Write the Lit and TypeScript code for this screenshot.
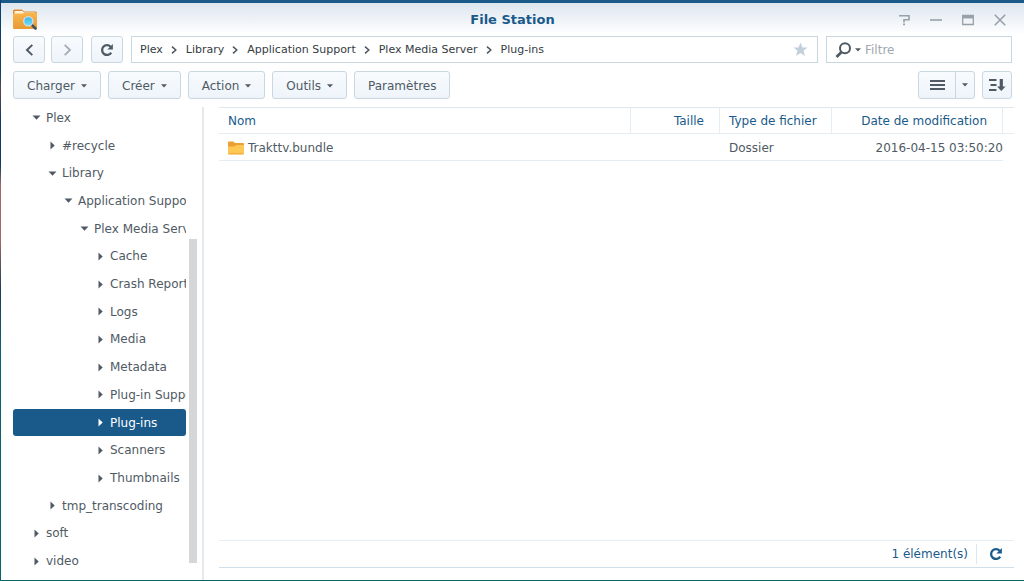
import { LitElement, html, css, svg, nothing } from "lit";
import { customElement, state } from "lit/decorators.js";
import { classMap } from "lit/directives/class-map.js";

type Node = { name: string; level: number; open?: boolean };

const TREE: Node[] = [
  { name: "Plex", level: 0, open: true },
  { name: "#recycle", level: 1 },
  { name: "Library", level: 1, open: true },
  { name: "Application Support", level: 2, open: true },
  { name: "Plex Media Server", level: 3, open: true },
  { name: "Cache", level: 4 },
  { name: "Crash Reports", level: 4 },
  { name: "Logs", level: 4 },
  { name: "Media", level: 4 },
  { name: "Metadata", level: 4 },
  { name: "Plug-in Support", level: 4 },
  { name: "Plug-ins", level: 4 },
  { name: "Scanners", level: 4 },
  { name: "Thumbnails", level: 4 },
  { name: "tmp_transcoding", level: 1 },
  { name: "soft", level: 0 },
  { name: "video", level: 0 },
];

const PATH = ["Plex", "Library", "Application Support", "Plex Media Server", "Plug-ins"];

const MENUS = [
  { label: "Charger", menu: true },
  { label: "Créer", menu: true },
  { label: "Action", menu: true },
  { label: "Outils", menu: true },
  { label: "Paramètres", menu: false },
];

const icon = (w: number, h: number, body: unknown) =>
  html`<svg width=${w} height=${h} viewBox="0 0 ${w} ${h}" aria-hidden="true">${body}</svg>`;

const caret = () => icon(6, 4, svg`<path d="M0 0.300h6L3 3.600z" fill="currentColor"/>`);
const refresh = (size: number) => html`<svg width=${size} height=${size} viewBox="0 0 14 14" aria-hidden="true">
  <path d="M11.2 9.6A4.9 4.9 0 1 1 10.6 3.7" fill="none" stroke="currentColor" stroke-width="2.3"/>
  <path d="M12.9 1v5.6H7.4z" fill="currentColor"/></svg>`;

const appIcon = icon(25, 21, svg`
  <defs><linearGradient id="fold" x1="0" y1="0" x2="0" y2="1">
    <stop offset="0" stop-color="#f9b54b"/><stop offset="1" stop-color="#e79a33"/></linearGradient>
    <linearGradient id="lens" x1="0" y1="0" x2="0" y2="1">
    <stop offset="0" stop-color="#3fb4ea"/><stop offset="1" stop-color="#6be0fb"/></linearGradient></defs>
  <path d="M0 2a1.5 1.5 0 0 1 1.5-1.5h7.5l2 2h11.500a1.5 1.5 0 0 1 1.5 1.500v6H0z" fill="#d98b2b"/>
  <path d="M1.500 2h8l1.500 1.500h11.500v2h-21z" fill="#fff2dc"/>
  <path d="M0 4.500h9.500l2-0.500H24v14.500a1.500 1.500 0 0 1-1.500 1.500h-21A1.500 1.500 0 0 1 0 18.500z" fill="url(#fold)"/>
  <path d="M18.600 15.600l3.900 3.900" stroke="#44505c" stroke-width="2.600" stroke-linecap="round"/>
  <circle cx="15.300" cy="12.300" r="4.600" fill="url(#lens)" stroke="#d5dde0" stroke-width="1.300"/>`);

const folderIcon = icon(16, 14, svg`
  <path d="M0 1.500a1 1 0 0 1 1-1h4.500l1.500 1.500h8a1 1 0 0 1 1 1v9H0z" fill="#ec9f35"/>
  <path d="M0 5.500h6.500L8 4h8v8.500a1 1 0 0 1-1 1H1a1 1 0 0 1-1-1z" fill="#fdc854"/>
  <path d="M0.500 12.800h15" stroke="#eeaa3e" stroke-width="1"/>`);

@customElement("app-root")
export class AppRoot extends LitElement {
  @state() private selected = "Plug-ins";

  static styles = css`
    :host {
      display: block;
      height: 100vh;
      box-sizing: border-box;
      padding: 0 0 1px 1px;
      background: linear-gradient(#0c3f70 0 70px, #5b4550 90px, #123a66 120px 165px, #a06a62 185px 240px, #1c3c5a 290px, #0b6270 60%, #0a6468);
      font: 12px/18px "DejaVu Sans", Verdana, sans-serif;
      color: #505a64;
    }
    * { box-sizing: border-box; }
    svg { display: block; flex: none; }
    button, input { font: inherit; color: inherit; margin: 0; }
    button { cursor: pointer; }
    .window {
      height: 100%;
      display: flex;
      flex-direction: column;
      border-top: 3px solid #195a8b;
      background: #fff linear-gradient(#dde6ef, #fff 32px) no-repeat;
    }
    .title {
      display: grid;
      grid-template-columns: 1fr auto 1fr;
      align-items: center;
      height: 33px;
      padding: 0 12px;
    }
    h1 { margin: 0; font-size: 13px; line-height: 18px; color: #195a8b; }
    .controls { display: flex; justify-content: flex-end; gap: 16px; padding-right: 4px; }
    .plain { display: flex; align-items: center; justify-content: center; padding: 0; border: 0; background: none; }
    .controls .plain { width: 16px; height: 16px; color: #98a1a9; }
    .bar { display: flex; align-items: center; padding: 0 12px; }
    .nav { height: 27px; }
    .tools { height: 28px; margin-top: 8px; gap: 7px; }
    .btn {
      display: flex;
      align-items: center;
      justify-content: center;
      gap: 6px;
      height: 28px;
      padding: 0 13px;
      border: 1px solid #c9d7e1;
      border-radius: 3px;
      background: linear-gradient(#f8fbfe, #eef4fa);
    }
    .menu { padding-top: 1px; }
    .square { width: 32px; height: 27px; padding: 0; margin-right: 6px; }
    .reload { margin: 0 8px 0 2px; }
    .dim { color: #a3acb4; }
    .path {
      flex: 1;
      display: flex;
      align-items: center;
      height: 27px;
      padding: 0 9px 0 8px;
      border: 1px solid #c9d7e1;
      background: #fff;
      font-size: 11px;
    }
    .path ol { flex: 1; display: flex; margin: 0; padding: 1px 0 0; list-style: none; }
    .path li { display: flex; align-items: center; gap: 8px; margin-right: 9px; }
    .path a { color: #353c43; text-decoration: none; white-space: nowrap; }
    .star { color: #c3d0dc; }
    .filter {
      width: 186px;
      height: 27px;
      margin-left: 8px;
      padding-left: 8px;
      display: flex;
      align-items: center;
      gap: 4px;
      border: 1px solid #c9d7e1;
      background: #fff;
    }
    .filter .plain { gap: 3px; }
    .filter input { flex: 1; min-width: 0; padding: 0; border: 0; outline: 0; background: none; font-size: 12px; }
    .filter input::placeholder { color: #a0a8b0; opacity: 1; }
    .split { display: flex; margin-left: auto; }
    .view { width: 38px; padding: 0; border-radius: 3px 0 0 3px; }
    .more { width: 20px; padding: 0; margin-left: -1px; border-radius: 0 3px 3px 0; }
    .sort { width: 30px; padding: 0; }
    .content { flex: 1; min-height: 0; display: flex; margin-top: 8px; padding-right: 10px; }
    .side { width: 203px; flex: none; display: flex; padding-left: 12px; border-right: 2px solid #e6e8ea; }
    .tree {
      flex: 1;
      min-width: 0;
      display: grid;
      grid-template-columns: minmax(0, 1fr);
      grid-auto-rows: 1fr;
      margin: -3px 3px 5px 0;
      padding: 0;
      list-style: none;
    }
    .tree li { display: flex; min-height: 0; }
    .node {
      flex: 1;
      min-width: 0;
      display: flex;
      align-items: center;
      gap: 5px;
      padding: 0;
      border: 0;
      border-radius: 3px;
      background: none;
      overflow: hidden;
      white-space: nowrap;
    }
    .mark { width: 9px; flex: none; display: flex; justify-content: center; }
    .l0 { padding-left: 19px; }
    .l1 { padding-left: 35px; }
    .l2 { padding-left: 51px; }
    .l3 { padding-left: 67px; }
    .l4 { padding-left: 83px; }
    .on { background: #195a8b; color: #fff; }
    .track { width: 8px; display: flex; flex-direction: column; justify-content: flex-end; margin: 0 5px 17px 0; }
    .thumb { height: 71%; background: #d4d6d8; }
    .main { flex: 1; min-width: 0; display: flex; flex-direction: column; margin: 0 0 12px 15px; }
    table { width: 100%; table-layout: fixed; border-collapse: separate; border-spacing: 0; border-top: 1px solid #dce8f1; }
    .w-size { width: 89px; }
    .w-type { width: 112px; }
    .w-date { width: 171px; }
    .w-end { width: 11px; }
    th, td { height: 27px; padding: 0 9px; border-bottom: 1px solid #e3edf5; text-align: left; font-weight: normal; white-space: nowrap; }
    td { padding-top: 1px; }
    th { height: 26px; color: #195a8b; border-right: 1px solid #e3edf5; }
    th.end { border-right: 0; padding: 0; }
    td.end { border-bottom: 0; padding: 0; }
    .num { text-align: right; }
    th.num { padding-right: 15px; }
    td.num { padding-right: 0; }
    .file { display: flex; align-items: center; gap: 4px; }
    .status {
      display: flex;
      align-items: center;
      justify-content: flex-end;
      height: 28px;
      margin-top: auto;
      border-top: 1px solid #e6eff7;
      border-bottom: 1px solid #cfdee9;
      color: #195a8b;
    }
    .status .plain { width: 38px; height: 20px; margin-left: 8px; border-left: 1px solid #dce8f1; }
  `;

  private arrow(open?: boolean) {
    return html`<span class="mark">${open
      ? icon(9, 5, svg`<path d="M0.500 0.500h8L4.500 4.700z" fill="currentColor"/>`)
      : icon(5, 9, svg`<path d="M0.500 0.500v8L4.700 4.500z" fill="currentColor"/>`)}</span>`;
  }

  render() {
    return html`
      <div class="window">
        <header class="title">
          ${appIcon}
          <h1>File Station</h1>
          <div class="controls">
            <button class="plain" aria-label="Aide">${icon(12, 12, svg`<path d="M1 1.800h10v3.900H6v2.800" fill="none" stroke="currentColor" stroke-width="1.600"/><path d="M5.100 9.500h1.900v1.700H5.100z" fill="currentColor"/>`)}</button>
            <button class="plain" aria-label="Réduire">${icon(12, 12, svg`<path d="M0 6h12" stroke="currentColor" stroke-width="1.600"/>`)}</button>
            <button class="plain" aria-label="Agrandir">${icon(12, 12, svg`<path d="M0.700 1.500h10.600v9H0.700z" fill="none" stroke="currentColor" stroke-width="1.300"/><path d="M0 1h12v3.400H0z" fill="currentColor"/>`)}</button>
            <button class="plain" aria-label="Fermer">${icon(12, 12, svg`<path d="M0.800 0.800l10.400 10.400M11.200 0.800L0.800 11.200" stroke="currentColor" stroke-width="1.600"/>`)}</button>
          </div>
        </header>

        <div class="bar nav">
          <button class="btn square" aria-label="Précédent">${icon(9, 12, svg`<path d="M7.300 0.900L2 6l5.300 5.100" fill="none" stroke="currentColor" stroke-width="2"/>`)}</button>
          <button class="btn square dim" aria-label="Suivant">${icon(9, 12, svg`<path d="M1.700 0.900L7 6l-5.300 5.100" fill="none" stroke="currentColor" stroke-width="1.800"/>`)}</button>
          <button class="btn square reload" aria-label="Actualiser">${refresh(14)}</button>
          <nav class="path" aria-label="Chemin">
            <ol>
              ${PATH.map((p, i) => html`<li><a href="#">${p}</a>${i < PATH.length - 1
                ? icon(6, 8, svg`<path d="M1 0.600L4.800 4L1 7.400" fill="none" stroke="#4c5660" stroke-width="1.500"/>`)
                : nothing}</li>`)}
            </ol>
            <button class="plain star" aria-label="Favori">${icon(15, 15, svg`<path d="M7.500 0.500l2 5h5l-4 3.300 1.500 5.200-4.500-3.100L3 14l1.500-5.200-4-3.300h5z" fill="currentColor"/>`)}</button>
          </nav>
          <div class="filter">
            <button class="plain" aria-label="Options de recherche">
              ${icon(17, 16, svg`<circle cx="10" cy="6.300" r="5" fill="none" stroke="currentColor" stroke-width="2"/><path d="M6.300 10.200L1.500 15" stroke="currentColor" stroke-width="2.800"/>`)}
              ${caret()}
            </button>
            <input type="text" placeholder="Filtre" aria-label="Filtre" />
          </div>
        </div>

        <div class="bar tools">
          ${MENUS.map((m) => html`<button class="btn menu">${m.label}${m.menu ? caret() : nothing}</button>`)}
          <div class="split">
            <button class="btn view" aria-label="Vue liste">${icon(15, 12, svg`<path d="M0 2h15M0 6h15M0 10h15" stroke="currentColor" stroke-width="1.800"/>`)}</button>
            <button class="btn more" aria-label="Choisir la vue">${caret()}</button>
          </div>
          <button class="btn sort" aria-label="Trier">${icon(17, 14, svg`<path d="M0 2h7.500M1.500 7h6M0 12h7.500" stroke="currentColor" stroke-width="1.900"/><path d="M10.700 1h3.200v7.500h2.600l-4.200 4.500-4.200-4.500h2.600z" fill="currentColor"/>`)}</button>
        </div>

        <div class="content">
          <aside class="side">
            <ul class="tree">
              ${TREE.map((n) => html`<li>
                <button
                  class=${classMap({ node: true, ["l" + n.level]: true, on: n.name === this.selected })}
                  @click=${() => (this.selected = n.name)}
                >${this.arrow(n.open)}<span>${n.name}</span></button>
              </li>`)}
            </ul>
            <div class="track"><div class="thumb"></div></div>
          </aside>
          <main class="main">
            <table>
              <colgroup>
                <col /><col class="w-size" /><col class="w-type" /><col class="w-date" /><col class="w-end" />
              </colgroup>
              <thead>
                <tr>
                  <th scope="col">Nom</th>
                  <th scope="col" class="num">Taille</th>
                  <th scope="col">Type de fichier</th>
                  <th scope="col" class="num">Date de modification</th>
                  <th class="end"></th>
                </tr>
              </thead>
              <tbody>
                <tr>
                  <td><span class="file">${folderIcon}Trakttv.bundle</span></td>
                  <td class="num"></td>
                  <td>Dossier</td>
                  <td class="num">2016-04-15 03:50:20</td>
                  <td class="end"></td>
                </tr>
              </tbody>
            </table>
            <footer class="status">
              <span>1 élément(s)</span>
              <button class="plain" aria-label="Actualiser">${refresh(14)}</button>
            </footer>
          </main>
        </div>
      </div>
    `;
  }
}
